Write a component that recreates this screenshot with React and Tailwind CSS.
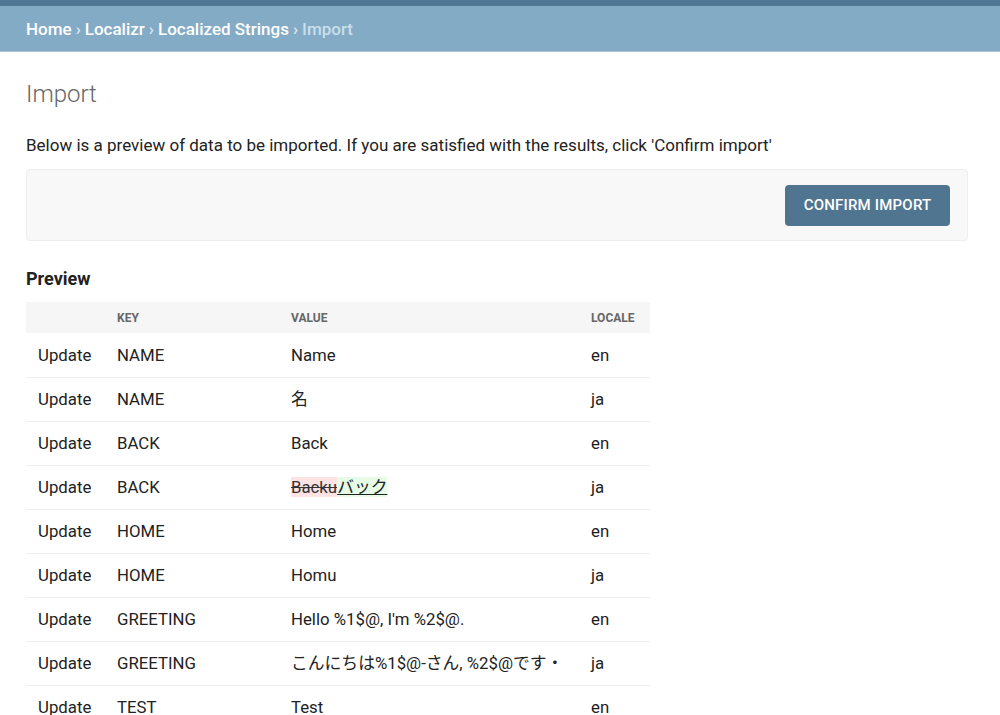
import React from 'react';

const rows = [
  { action: 'Update', key: 'NAME', value: 'Name', locale: 'en' },
  { action: 'Update', key: 'NAME', value: '名', locale: 'ja' },
  { action: 'Update', key: 'BACK', value: 'Back', locale: 'en' },
  { action: 'Update', key: 'BACK', diff: true, locale: 'ja' },
  { action: 'Update', key: 'HOME', value: 'Home', locale: 'en' },
  { action: 'Update', key: 'HOME', value: 'Homu', locale: 'ja' },
  { action: 'Update', key: 'GREETING', value: "Hello %1$@, I'm %2$@.", locale: 'en' },
  { action: 'Update', key: 'GREETING', value: 'こんにちは%1$@-さん, %2$@です・', locale: 'ja' },
  { action: 'Update', key: 'TEST', value: 'Test', locale: 'en' },
];

const font = { fontFamily: 'Roboto, "Noto Sans CJK JP", sans-serif' };

export default function App() {
  return (
    <div className="min-h-[715px] bg-white text-[#333]" style={font}>
      {/* header */}
      <div className="h-[6px] bg-[#4f7896]" />
      <div className="h-[46px] bg-[#84abc6] border-b border-[#a9c6d8] px-[26px] pt-[3px] flex items-center text-[17px] font-medium text-white">
        <span>Home</span>
        <span className="mx-[4px] text-[#dceaf2]">›</span>
        <span>Localizr</span>
        <span className="mx-[4px] text-[#dceaf2]">›</span>
        <span>Localized Strings</span>
        <span className="mx-[4px] text-[#dceaf2]">›</span>
        <span className="text-[#c9dfea]">Import</span>
      </div>

      <div className="px-[26px] pr-[32px]">
        <h1 className="mt-[27px] text-[24px] font-light text-[#666] leading-[30px]">Import</h1>

        <p className="mt-[26px] text-[17px] leading-[20px] text-[#222]">
          Below is a preview of data to be imported. If you are satisfied with the results, click 'Confirm import'
        </p>

        <div className="mt-[14px] h-[72px] rounded-[4px] border border-[#eee] bg-[#f8f8f8] flex items-center justify-end pr-[17px]">
          <button className="h-[41px] w-[165px] rounded-[4px] bg-[#4f7590] text-white text-[15px] font-medium tracking-[0.2px]">
            CONFIRM IMPORT
          </button>
        </div>

        <h2 className="mt-[27px] text-[18px] font-bold text-[#222] leading-[22px]">Preview</h2>

        <table className="mt-[12px] w-[624px] border-collapse text-left">
          <thead>
            <tr className="bg-[#f6f6f6] h-[31px]">
              <th className="w-[79px]" />
              <th className="w-[174px] pl-[12px] text-[12px] font-bold text-[#666]">KEY</th>
              <th className="w-[300px] pl-[12px] text-[12px] font-bold text-[#666]">VALUE</th>
              <th className="pl-[12px] text-[12px] font-bold text-[#666]">LOCALE</th>
            </tr>
          </thead>
          <tbody className="text-[16.8px] text-[#222]">
            {rows.map((r, i) => (
              <tr key={i} className="h-[44px] border-b border-[#eee]">
                <td className="pl-[12px] pt-[2px]">{r.action}</td>
                <td className="pl-[12px] pt-[2px]">{r.key}</td>
                <td className="pl-[12px] pt-[2px] whitespace-nowrap">
                  {r.diff ? (
                    <span>
                      <del className="bg-[#fde3e3] text-[#333]">Backu</del>
                      <ins className="bg-[#e6fce6] text-[#222] underline">バック</ins>
                    </span>
                  ) : (
                    r.value
                  )}
                </td>
                <td className="pl-[12px] pt-[2px]">{r.locale}</td>
              </tr>
            ))}
          </tbody>
        </table>
      </div>
    </div>
  );
}
